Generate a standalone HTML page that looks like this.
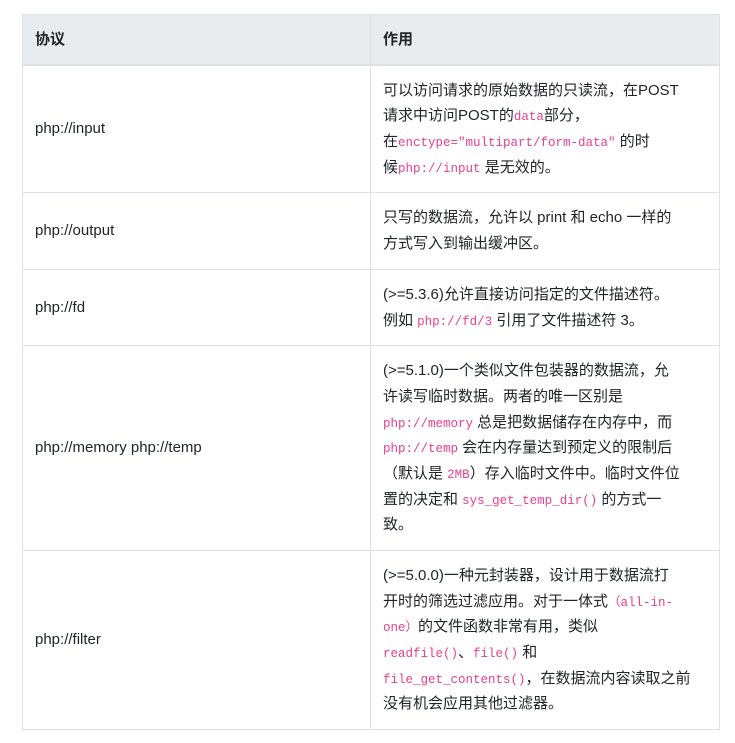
<!DOCTYPE html>
<html><head><meta charset="utf-8"><style>
body{margin:0;background:#fff;font-family:"Liberation Sans","Noto Sans CJK SC",sans-serif;font-size:15px;color:#212529;}
table{position:absolute;left:22px;top:14px;border-collapse:collapse;width:698px;}
td,th{border:1px solid #dee2e6;padding:12px 12px;line-height:25.7px;vertical-align:middle;text-align:left;white-space:nowrap;}
td div,th div{height:25.7px;overflow:visible;}
th{background:#e9ecef;font-weight:bold;border-bottom:2px solid #dee2e6;padding:12px 12px 11px;}
td:first-child,th:first-child{width:323px;}
code{font-family:"Liberation Mono","Noto Sans CJK SC",monospace;font-size:12.5px;color:#e83e8c;line-height:1;}
</style></head><body>
<table>
<tr><th><div>协议</div></th><th><div>作用</div></th></tr>
<tr><td><div>php://input</div></td><td><div>可以访问请求的原始数据的只读流，在POST</div><div>请求中访问POST的<code>data</code>部分，</div><div>在<code>enctype="multipart/form-data"</code> 的时</div><div>候<code>php://input</code> 是无效的。</div></td></tr>
<tr><td><div>php://output</div></td><td><div>只写的数据流，允许以 print 和 echo 一样的</div><div>方式写入到输出缓冲区。</div></td></tr>
<tr><td><div>php://fd</div></td><td><div>(&gt;=5.3.6)允许直接访问指定的文件描述符。</div><div>例如 <code>php://fd/3</code> 引用了文件描述符 3。</div></td></tr>
<tr><td><div>php://memory php://temp</div></td><td><div>(&gt;=5.1.0)一个类似文件包装器的数据流，允</div><div>许读写临时数据。两者的唯一区别是</div><div><code>php://memory</code> 总是把数据储存在内存中，而</div><div><code>php://temp</code> 会在内存量达到预定义的限制后</div><div>（默认是 <code>2MB</code>）存入临时文件中。临时文件位</div><div>置的决定和 <code>sys_get_temp_dir()</code> 的方式一</div><div>致。</div></td></tr>
<tr><td><div>php://filter</div></td><td><div>(&gt;=5.0.0)一种元封装器，设计用于数据流打</div><div>开时的筛选过滤应用。对于一体式<code>（all-in-</code></div><div><code>one）</code>的文件函数非常有用，类似</div><div><code>readfile()</code>、<code>file()</code> 和</div><div><code>file_get_contents()</code>，在数据流内容读取之前</div><div>没有机会应用其他过滤器。</div></td></tr>
</table>
</body></html>
